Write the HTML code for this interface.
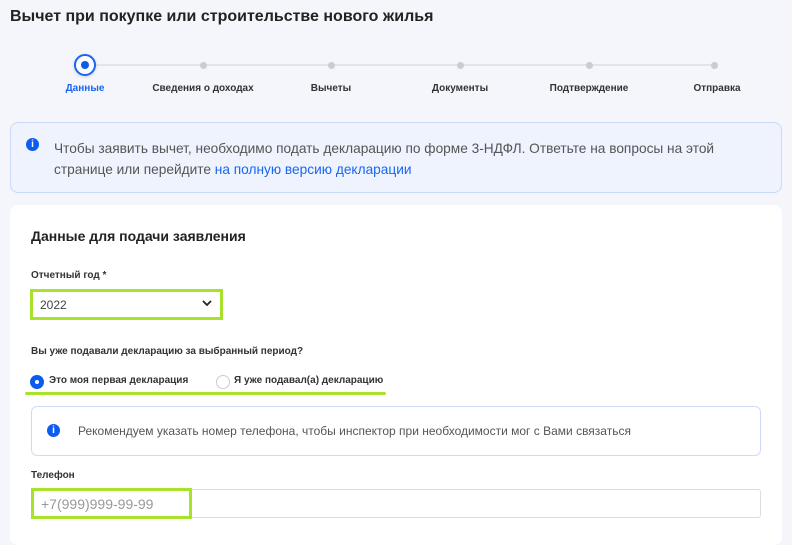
<!DOCTYPE html>
<html><head><meta charset="utf-8"><style>
*{margin:0;padding:0;box-sizing:border-box}
body{width:792px;height:533px;overflow:hidden;background:#f4f6fc;font-family:"Liberation Sans","DejaVu Sans",sans-serif;position:relative;color:#222}
.a{position:absolute;white-space:nowrap}
.b{font-weight:bold}
.lbl{font-size:10px;font-weight:bold;color:#333;transform:translateX(-50%)}
.dot{position:absolute;width:7px;height:7px;border-radius:50%;background:#c9ccd2;top:62px}
.ic{position:absolute;width:13px;height:13px;border-radius:50%;background:#0d5cf0;color:#fff;font-size:10px;font-weight:bold;text-align:center;line-height:13px;font-family:"Liberation Sans",sans-serif}
</style></head><body>
<div class="a b" style="left:10px;top:8px;font-size:16px;color:#222">Вычет при покупке или строительстве нового жилья</div>
<div class="a" style="left:85px;top:64px;width:629px;height:2px;background:#e1e4ea"></div>
<div class="a" style="left:74px;top:54px;width:22px;height:22px;border-radius:50%;background:#fff;border:2px solid #1a66f0;box-shadow:0 1px 3px rgba(0,0,0,.15)"></div>
<div class="a" style="left:81px;top:61px;width:8px;height:8px;border-radius:50%;background:#0d5cf0"></div>
<div class="dot" style="left:200px"></div><div class="dot" style="left:328px"></div><div class="dot" style="left:457px"></div><div class="dot" style="left:586px"></div><div class="dot" style="left:711px"></div>
<div class="a lbl" style="left:85px;top:83px;color:#1a66f0">Данные</div>
<div class="a lbl" style="left:203px;top:83px">Сведения о доходах</div>
<div class="a lbl" style="left:331px;top:83px">Вычеты</div>
<div class="a lbl" style="left:460px;top:83px">Документы</div>
<div class="a lbl" style="left:589px;top:83px">Подтверждение</div>
<div class="a lbl" style="left:717px;top:83px">Отправка</div>

<div class="a" style="left:10px;top:122px;width:772px;height:71px;background:#eef3fd;border:1px solid #c9dbf7;border-radius:8px"></div>
<div class="ic" style="left:26px;top:138px">i</div>
<div class="a" style="left:54px;top:138px;font-size:13.7px;color:#555;line-height:21px">Чтобы заявить вычет, необходимо подать декларацию по форме 3-НДФЛ. Ответьте на вопросы на этой<br>странице или перейдите <span style="color:#1a66f0">на полную версию декларации</span></div>

<div class="a" style="left:10px;top:205px;width:772px;height:340px;background:#fff;border-radius:8px"></div>
<div class="a b" style="left:31px;top:228px;font-size:14px">Данные для подачи заявления</div>
<div class="a b" style="left:31px;top:270px;font-size:10px;color:#333">Отчетный год *</div>
<div class="a" style="left:30px;top:289px;width:193px;height:31px;border:3px solid #a9e22a;background:#fff"></div>
<div class="a" style="left:40px;top:298px;font-size:12px;color:#444">2022</div>
<svg class="a" style="left:202px;top:300px" width="10" height="7" viewBox="0 0 10 7"><path d="M1 1l4 4 4-4" fill="none" stroke="#222" stroke-width="1.8"/></svg>
<div class="a b" style="left:31px;top:346px;font-size:10px;color:#333">Вы уже подавали декларацию за выбранный период?</div>
<div class="a" style="left:30px;top:375px;width:14px;height:14px;border-radius:50%;background:#0d5cf0"></div>
<div class="a" style="left:35px;top:380px;width:4px;height:4px;border-radius:50%;background:#fff"></div>
<div class="a b" style="left:49px;top:375px;font-size:10px;color:#333">Это моя первая декларация</div>
<div class="a" style="left:216px;top:375px;width:14px;height:14px;border-radius:50%;border:1px solid #ccc;background:#fff"></div>
<div class="a b" style="left:234px;top:375px;font-size:10px;color:#333">Я уже подавал(а) декларацию</div>
<div class="a" style="left:25px;top:392px;width:361px;height:3px;background:#a9e22a;border-radius:2px"></div>

<div class="a" style="left:31px;top:406px;width:730px;height:50px;border:1px solid #cddcf6;border-radius:6px"></div>
<div class="ic" style="left:47px;top:424px">i</div>
<div class="a" style="left:78px;top:424px;font-size:12px;color:#555">Рекомендуем указать номер телефона, чтобы инспектор при необходимости мог с Вами связаться</div>
<div class="a b" style="left:31px;top:470px;font-size:10px;color:#333">Телефон</div>
<div class="a" style="left:31px;top:489px;width:730px;height:29px;border:1px solid #ddd;border-radius:3px"></div>
<div class="a" style="left:31px;top:488px;width:161px;height:31px;border:3px solid #a9e22a"></div>
<div class="a" style="left:41px;top:496px;font-size:14px;color:#999">+7(999)999-99-99</div>
</body></html>
